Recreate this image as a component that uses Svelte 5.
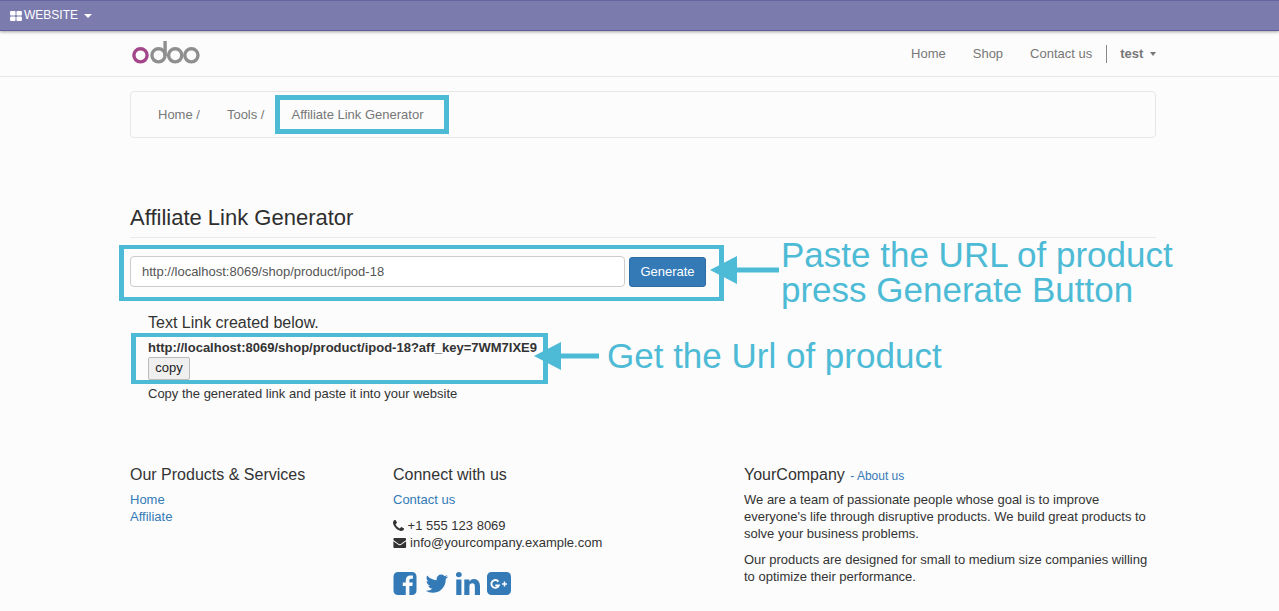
<script>
  const ICONS = {
    th: 'M832 1024v384q0 52-38 90t-90 38h-512q-52 0-90-38t-38-90v-384q0-52 38-90t90-38h512q52 0 90 38t38 90zm0-768v384q0 52-38 90t-90 38h-512q-52 0-90-38t-38-90v-384q0-52 38-90t90-38h512q52 0 90 38t38 90zm896 768v384q0 52-38 90t-90 38h-512q-52 0-90-38t-38-90v-384q0-52 38-90t90-38h512q52 0 90 38t38 90zm0-768v384q0 52-38 90t-90 38h-512q-52 0-90-38t-38-90v-384q0-52 38-90t90-38h512q52 0 90 38t38 90z',
    phone: 'M1600 1240q0 27-10 70.5t-21 68.5q-21 50-122 106-94 51-186 51-27 0-53-3.5t-57.5-12.5-47-14.5-55.5-20.5-49-18q-98-35-175-83-127-79-264-216t-216-264q-48-77-83-175-3-9-18-49t-20.5-55.5-14.5-47-12.5-57.5-3.5-53q0-92 51-186 56-101 106-122 25-11 68.5-21t70.5-10q14 0 21 3 18 6 53 76 11 19 30 54t35 63.5 31 53.5q3 4 17.5 25t21.5 35.5 7 28.5q0 20-28.5 50t-62 55-62 53-28.5 46q0 9 5 22.5t8.5 20.5 14 24 11.5 19q76 137 174 235t235 174q2 1 19 11.5t24 14 20.5 8.5 22.5 5q18 0 46-28.5t53-62 55-62 50-28.5q14 0 28.5 7t35.5 21.5 25 17.5q25 15 53.5 31t63.5 35 54 30q70 35 76 53 3 7 3 21z',
    envelope: 'M1792 710v794q0 66-47 113t-113 47h-1472q-66 0-113-47t-47-113v-794q44 49 101 87 362 246 497 345 57 42 92.5 65.5t94.5 48 110 24.5h2q51 0 110-24.5t94.5-48 92.5-65.5q170-123 498-345 57-39 100-87zm0-294q0 79-49 151t-122 123q-376 261-468 325-10 7-42.5 30.5t-54 38-52 32.5-57.5 27-50 9h-2q-23 0-50-9t-57.5-27-52-32.5-54-38-42.5-30.5q-91-64-262-182.5t-205-142.5q-62-42-117-115.5t-55-136.5q0-78 41.5-130t118.5-52h1472q65 0 112.5 47t47.5 113z',
    facebook: 'M1376 128q119 0 203.5 84.5t84.5 203.5v960q0 119-84.5 203.5t-203.5 84.5h-188v-595h199l30-232h-229v-148q0-56 23.5-84t91.5-28l122-1v-207q-63-9-178-9-136 0-217.5 80t-81.5 226v171h-200v232h200v595h-532q-119 0-203.5-84.5t-84.5-203.5v-960q0-119 84.5-203.5t203.5-84.5h960z',
    twitter: 'M1684 408q-67 98-162 167 1 14 1 42 0 130-38 259.5t-115.5 248.5-184.5 210.5-258 146-323 54.5q-271 0-496-145 35 4 78 4 225 0 401-138-105-2-188-64.5t-114-159.5q33 5 61 5 43 0 85-11-112-23-185.5-111.5t-73.5-205.5v-4q68 38 146 41-66-44-105-115t-39-154q0-88 44-163 121 149 294.5 238.5t371.5 99.5q-8-38-8-74 0-134 94.5-228.5t228.5-94.5q140 0 236 102 109-21 200-76-35 109-138 167 100-11 182-52z',
    linkedin: 'M477 625v991h-330v-991h330zm21-306q1 73-50.5 122t-135.5 49h-2q-82 0-132-49t-50-122q0-74 51.5-122.5t134.5-48.5 133 48.5 51 122.5zm1166 729v568h-329v-530q0-105-40.5-164.5t-126.5-59.5q-63 0-105.5 34.5t-63.5 85.5q-11 30-11 81v553h-329q2-399 2-647t-1-296l-1-48h329v144h-2q20-32 41-56t56.5-52 87-43.5 114.5-15.5q171 0 275 113.5t104 332.5z'
  };
</script>

<div class="page">
  <div class="topbar">
    <svg class="th" viewBox="64 128 1664 1408"><path d={ICONS.th} /></svg>
    <span>WEBSITE</span>
    <i class="caret"></i>
  </div>

  <header class="navbar">
    <div class="wrap nav-inner">
      <svg class="logo" viewBox="0 0 68 23" aria-label="odoo">
        <circle cx="8.5" cy="14.3" r="6.6" fill="none" stroke="#a24689" stroke-width="3.4" />
        <circle cx="26.5" cy="14.3" r="6.6" fill="none" stroke="#8f8f8f" stroke-width="3.4" />
        <rect x="31.4" y="0" width="3.4" height="15" fill="#8f8f8f" />
        <circle cx="43.2" cy="14.3" r="6.6" fill="none" stroke="#8f8f8f" stroke-width="3.4" />
        <circle cx="59.4" cy="14.3" r="6.6" fill="none" stroke="#8f8f8f" stroke-width="3.4" />
      </svg>
      <nav class="menu">
        <a href="#home">Home</a>
        <a href="#shop">Shop</a>
        <a href="#contact">Contact us</a>
        <span class="divider"></span>
        <a class="user" href="#user">test <i class="caret small"></i></a>
      </nav>
    </div>
  </header>

  <div class="wrap">
    <div class="breadcrumb">
      <a href="#home">Home /</a>
      <a href="#tools">Tools /</a>
      <span class="crumb-active">Affiliate Link Generator</span>
    </div>

    <h1>Affiliate Link Generator</h1>
    <div class="rule"></div>

    <div class="gen-frame">
      <input type="text" value="http://localhost:8069/shop/product/ipod-18" />
      <button class="generate" type="button">Generate</button>
    </div>

    <div class="result">
      <p class="created">Text Link created below.</p>
      <div class="link-frame">
        <b>http://localhost:8069/shop/product/ipod-18?aff_key=7WM7IXE9</b>
        <button class="copy" type="button">copy</button>
      </div>
      <p class="hint">Copy the generated link and paste it into your website</p>
    </div>

    <footer class="footer">
      <div>
        <h4>Our Products &amp; Services</h4>
        <a class="line" href="#home">Home</a>
        <a class="line" href="#affiliate">Affiliate</a>
      </div>
      <div>
        <h4>Connect with us</h4>
        <a class="line" href="#contact">Contact us</a>
        <div class="contact">
          <div><svg class="fa" viewBox="192 128 1408 1408"><path d={ICONS.phone} /></svg> +1 555 123 8069</div>
          <div><svg class="fa env" viewBox="0 256 1792 1408"><path d={ICONS.envelope} /></svg> info@yourcompany.example.com</div>
        </div>
        <div class="social">
          <svg viewBox="128 128 1536 1536" class="s-fb"><path d={ICONS.facebook} /></svg>
          <svg viewBox="64 220 1620 1330" class="s-tw"><path d={ICONS.twitter} /></svg>
          <svg viewBox="130 148 1534 1468" class="s-in"><path d={ICONS.linkedin} /></svg>
          <svg viewBox="0 0 24 23" class="s-gp">
            <rect width="24" height="23" rx="4.5" fill="#337ab7" />
            <path d="M11.4 9.6A3.9 3.9 0 1 0 11.9 13.4h-3.6" fill="none" stroke="#fcfcfc" stroke-width="1.9" />
            <path d="M15 12h5M17.5 9.5v5" fill="none" stroke="#fcfcfc" stroke-width="1.5" />
          </svg>
        </div>
      </div>
      <div class="about">
        <h4>YourCompany <small>- <a href="#about">About us</a></small></h4>
        <p>We are a team of passionate people whose goal is to improve everyone's life through disruptive products. We build great products to solve your business problems.</p>
        <p>Our products are designed for small to medium size companies willing to optimize their performance.</p>
      </div>
    </footer>
  </div>

  <!-- annotations drawn over the screenshot -->
  <svg class="arrow a1" viewBox="0 0 70 30"><path d="M0 15 27 1v11.5h42v5H27V29z" /></svg>
  <div class="note n1">Paste the URL of product<br />press Generate Button</div>
  <svg class="arrow a2" viewBox="0 0 66 28"><path d="M0 14 27 0v11.5h38v5H27V28z" /></svg>
  <div class="note n2">Get the Url of product</div>
</div>

<style>
  :global(body) {
    margin: 0;
    background: #fcfcfc;
  }

  .page {
    position: relative;
    height: 611px;
    overflow: hidden;
    font-family: "Liberation Sans", Arial, sans-serif;
    font-size: 13px;
    line-height: 17px;
    color: #333;
  }

  a {
    color: #337ab7;
    text-decoration: none;
  }

  .wrap {
    width: 1026px;
    margin-left: 130px;
  }

  .topbar {
    height: 31px;
    box-sizing: border-box;
    display: flex;
    align-items: center;
    padding-left: 10px;
    gap: 2px;
    background: #7c7bad;
    border-top: 1px solid #6665a0;
    border-bottom: 1px solid #5f5e98;
    box-shadow: 0 1px 3px rgba(0, 0, 0, 0.35);
    color: #fff;
    font-size: 12px;
    position: relative;
  }

  .th {
    width: 12px;
    height: 10px;
    fill: #fff;
  }

  .caret {
    display: inline-block;
    width: 0;
    height: 0;
    margin-left: 4px;
    border-top: 4px solid #fff;
    border-left: 4px solid transparent;
    border-right: 4px solid transparent;
  }

  .navbar {
    height: 46px;
    box-sizing: border-box;
    border-bottom: 1px solid #e7e7e7;
  }

  .nav-inner {
    display: flex;
    align-items: center;
    justify-content: space-between;
    height: 45px;
  }

  .logo {
    width: 68px;
    height: 23px;
    margin: 0 0 0 2px;
    position: relative;
    top: -1px;
  }

  .menu {
    display: flex;
    align-items: center;
  }

  .menu a {
    color: #777;
    margin-left: 27px;
  }

  .divider {
    width: 1px;
    height: 18px;
    background: #888;
    margin-left: 14px;
  }

  .menu .user {
    margin-left: 13px;
    font-weight: bold;
  }

  .caret.small {
    border-top-color: #777;
    border-width: 4px 3.5px 0;
    border-left-color: transparent;
    border-right-color: transparent;
    margin-left: 3px;
    vertical-align: 2px;
  }

  .breadcrumb {
    display: flex;
    align-items: center;
    height: 47px;
    box-sizing: border-box;
    margin-top: 14px;
    border: 1px solid #e7e7e7;
    border-radius: 4px;
    padding-left: 27px;
  }

  .breadcrumb a {
    color: #777;
    margin-right: 27px;
  }

  .breadcrumb a:nth-child(2) {
    margin-right: 11px;
  }

  .crumb-active {
    box-sizing: border-box;
    height: 39px;
    display: flex;
    align-items: center;
    padding: 0 21px 0 11px;
    border: 5px solid #4dbbd5;
    color: #777;
  }

  h1 {
    margin: 67px 0 0;
    font-size: 22px;
    font-weight: normal;
    line-height: 26px;
    color: #2f2f2f;
  }

  .rule {
    height: 1px;
    margin-top: 6px;
    background: #e9e9e9;
  }

  .gen-frame {
    display: flex;
    width: fit-content;
    margin: 7px 0 0 -11px;
    padding: 7px 13px 10px 6px;
    border: solid #4dbbd5;
    border-width: 4px 5px;
    gap: 4px;
  }

  input {
    box-sizing: border-box;
    width: 495px;
    height: 31px;
    padding: 0 11px;
    font: inherit;
    color: #555;
    background: #fff;
    border: 1px solid #ccc;
    border-radius: 4px;
  }

  .generate {
    width: 77px;
    height: 30px;
    align-self: flex-end;
    padding: 0 0 2px;
    font: inherit;
    color: #fff;
    background: #337ab7;
    border: 1px solid #2e6da4;
    border-radius: 3px;
  }

  .result {
    margin-top: 11px;
  }

  .created {
    margin: 0 0 0 18px;
    font-size: 16px;
    line-height: 21px;
  }

  .link-frame {
    width: 395px;
    height: 41px;
    margin: 0 0 0 1px;
    padding: 2px 0 0 12px;
    border: solid #4dbbd5;
    border-width: 4px 5px;
  }

  .link-frame b {
    display: block;
    white-space: nowrap;
    line-height: 17px;
    color: #333;
  }

  .copy {
    display: block;
    width: 42px;
    height: 23px;
    padding: 0 0 2px;
    margin-top: 1px;
    font: inherit;
    color: #222;
    background: #efefef;
    border: 1px solid #bbb;
    border-radius: 2px;
  }

  .hint {
    margin: 1px 0 0 18px;
  }

  .footer {
    display: grid;
    grid-template-columns: 263px 351px 412px;
    margin-top: 63px;
  }

  h4 {
    margin: 0 0 6px;
    font-size: 16px;
    font-weight: normal;
    line-height: 20px;
  }

  .about h4 {
    margin-bottom: 5px;
  }

  h4 small {
    margin-left: 1px;
    font-size: 12px;
    color: #337ab7;
  }

  .line {
    display: block;
  }

  .contact {
    margin-top: 9px;
  }

  .fa {
    width: 11px;
    height: 11px;
    fill: #333;
    vertical-align: -1px;
  }

  .fa.env {
    width: 13.5px;
    height: 10px;
    vertical-align: -1px;
  }

  p {
    margin: 0 0 9px;
  }

  .social {
    display: flex;
    align-items: center;
    margin-top: 21px;
  }

  .social svg {
    fill: #337ab7;
    height: 23px;
    width: 24px;
    flex: none;
  }

  .social .s-tw {
    width: 23px;
    height: 19px;
    margin-left: 8px;
  }

  .social .s-in {
    margin-left: 8px;
  }

  .social .s-gp {
    margin-left: 7px;
  }

  .arrow {
    position: absolute;
    fill: #4dbbd5;
  }

  .a1 {
    left: 710px;
    top: 255px;
    width: 70px;
    height: 30px;
  }

  .a2 {
    left: 534px;
    top: 342px;
    width: 66px;
    height: 28px;
  }

  .note {
    position: absolute;
    font-size: 35px;
    line-height: 35px;
    color: #4dbbd5;
    white-space: nowrap;
  }

  .n1 {
    left: 781px;
    top: 237px;
  }

  .n2 {
    left: 607px;
    top: 338px;
  }
</style>
